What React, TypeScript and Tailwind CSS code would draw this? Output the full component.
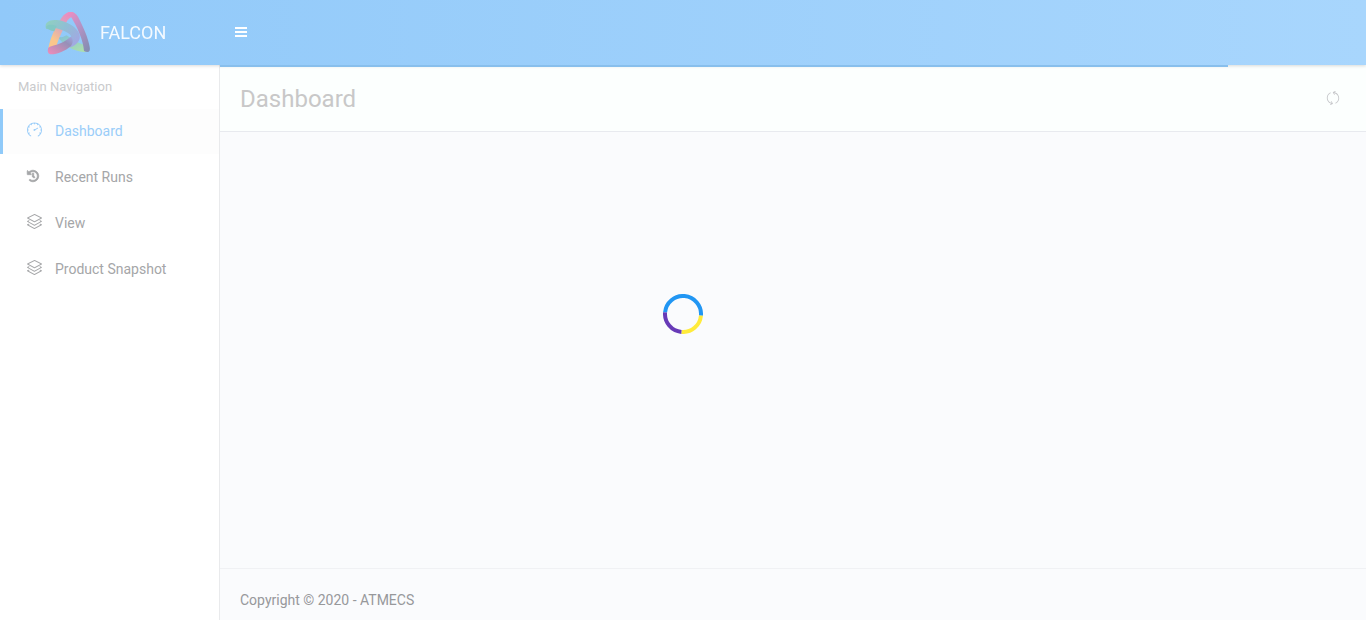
import type { ReactNode } from "react";
import { SlLayers, SlRefresh, SlSpeedometer } from "react-icons/sl";
import { FaHistory } from "react-icons/fa";

type NavItem = { label: string; icon: ReactNode; active?: boolean };

const navItems: NavItem[] = [
  { label: "Dashboard", icon: <SlSpeedometer className="size-[15px]" />, active: true },
  { label: "Recent Runs", icon: <FaHistory className="size-3 overflow-visible" stroke="currentColor" strokeWidth={28} /> },
  { label: "View", icon: <SlLayers className="size-[15px]" /> },
  { label: "Product Snapshot", icon: <SlLayers className="size-[15px]" /> },
];

function Logo() {
  return (
    <svg viewBox="24 18 144 138" className="h-[46px] w-12" aria-hidden="true">
      <defs>
        <linearGradient id="left" x1="0.8" y1="0" x2="0.2" y2="1">
          <stop offset="0" stopColor="#ea8cc0" />
          <stop offset="0.45" stopColor="#d9a6bb" />
          <stop offset="0.8" stopColor="#fac68c" />
        </linearGradient>
        <linearGradient id="right" x1="0.1" y1="0" x2="0.8" y2="1">
          <stop offset="0" stopColor="#f08cc0" />
          <stop offset="0.4" stopColor="#bb93c6" />
          <stop offset="1" stopColor="#868db3" />
        </linearGradient>
        <linearGradient id="band" x1="0" y1="0" x2="1" y2="0.7">
          <stop offset="0" stopColor="#90d2bd" />
          <stop offset="0.5" stopColor="#8fbfd4" />
          <stop offset="1" stopColor="#a2a8e2" />
        </linearGradient>
        <linearGradient id="base" x1="0" y1="1" x2="1" y2="0">
          <stop offset="0" stopColor="#f08cbc" />
          <stop offset="0.4" stopColor="#bf8eb6" />
          <stop offset="0.7" stopColor="#9690b8" />
          <stop offset="1" stopColor="#a2a8e2" />
        </linearGradient>
        <linearGradient id="foot" x1="0" y1="0" x2="1" y2="1">
          <stop offset="0" stopColor="#80bfda" />
          <stop offset="1" stopColor="#b2e3a8" />
        </linearGradient>
      </defs>
      <path d="M62 94 C74 104 82 98 92 94 C110 108 130 120 150 124 C160 130 158 145 144 144 C114 142 82 126 62 94Z" fill="url(#foot)" />
      <path d="M37 135 C40 110 58 66 78 40 C86 28 98 22 112 25 L114 38 C98 38 92 52 86 66 C76 88 66 108 61 127Z" fill="url(#left)" />
      <path d="M92 28 C108 18 122 28 129 44 C142 70 156 100 161 128 C164 142 158 148 144 141 C142 110 124 70 106 40 C103 35 97 35 90 41Z" fill="url(#right)" />
      <path d="M30 74 C24 54 42 46 62 48 C94 51 124 70 131 92 C134 110 124 120 104 130 C88 128 90 112 104 102 C110 94 96 86 78 78 C58 71 40 64 33 76Z" fill="url(#band)" />
      <path d="M30 70 C32 60 46 60 62 66 L55 82 C43 80 34 77 30 70Z" fill="#83c8c4" />
      <path d="M37 131 C48 122 76 124 104 98 C112 104 112 116 105 126 C88 141 64 151 46 151 C36 150 33 142 37 131Z" fill="url(#base)" />
    </svg>
  );
}

function Spinner() {
  return (
    <svg role="status" aria-label="Loading" viewBox="0 0 40 40" className="size-10">
      <g fill="none" strokeWidth="4" transform="rotate(5 20 20)">
        <path d="M2 20 A18 18 0 0 1 38 20" stroke="#2196f3" />
        <path d="M38 20 A18 18 0 0 1 20 38" stroke="#ffeb3b" />
        <path d="M20 38 A18 18 0 0 1 2 20" stroke="#673ab7" />
      </g>
    </svg>
  );
}

export default function App() {
  return (
    <div className="flex min-h-screen flex-col bg-[#fafbfd] font-[Roboto,sans-serif] text-sm">
      <header className="z-10 flex h-[65px] items-center bg-linear-to-r from-[#91c9f9] to-[#a8d6fd] text-white shadow-[0_1px_3px_rgba(0,0,0,0.15)]">
        <a href="#dashboard" className="flex w-[220px] items-center gap-2 pl-11 text-lg text-[#f4faff]">
          <Logo />
          FALCON
        </a>
        <button type="button" aria-label="Toggle navigation" className="ml-[15px] pb-0.5">
          <svg viewBox="0 0 12 10" className="h-[10px] w-3" fill="currentColor" shapeRendering="crispEdges">
            <path d="M0 0h12v2H0zM0 4h12v2H0zM0 8h12v2H0z" />
          </svg>
        </button>
      </header>

      <div className="flex grow">
        <nav aria-label="Main Navigation" className="w-[220px] shrink-0 border-r border-[#e9eaec] bg-white">
          <h2 className="px-[18px] py-3 text-[13px] leading-5 text-[#c9cacc]">Main Navigation</h2>
          <ul className="flex flex-col">
            {navItems.map((item) => (
              <li key={item.label}>
                <a
                  href="#"
                  aria-current={item.active ? "page" : undefined}
                  className={
                    item.active
                      ? "flex h-[45px] items-center border-l-3 border-[#90caf9] bg-[#fdfdfd] pb-0.5 pl-6 text-[#9acdf9]"
                      : "flex h-[46px] items-center border-l-3 border-transparent pb-px pl-6 text-[#a5a6a8]"
                  }
                >
                  <span className="w-7 pb-0.5">{item.icon}</span>
                  {item.label}
                </a>
              </li>
            ))}
          </ul>
        </nav>

        <div className="flex min-w-0 grow flex-col">
          <div className="relative flex h-[67px] items-center justify-between border-b border-[#e8eaef] bg-[#fcfffe] px-5">
            <div className="absolute top-0 left-0 z-20 h-0.5 w-[88%] bg-[#88bfec]" />
            <h1 className="pt-0.5 text-2xl text-[#c8c8c8]">Dashboard</h1>
            <button type="button" aria-label="Refresh" className="mr-1.5 text-[#c5c6c9]">
              <SlRefresh className="size-[14px]" />
            </button>
          </div>
          <main className="grow" />
          <footer className="border-t border-[#f0f1f4] px-5 pt-[21px] pb-[10px] leading-5 text-[#97989b]">
            Copyright © 2020 - ATMECS
          </footer>
        </div>
      </div>

      <div className="pointer-events-none fixed inset-0 flex items-center justify-center pt-2">
        <Spinner />
      </div>
    </div>
  );
}
